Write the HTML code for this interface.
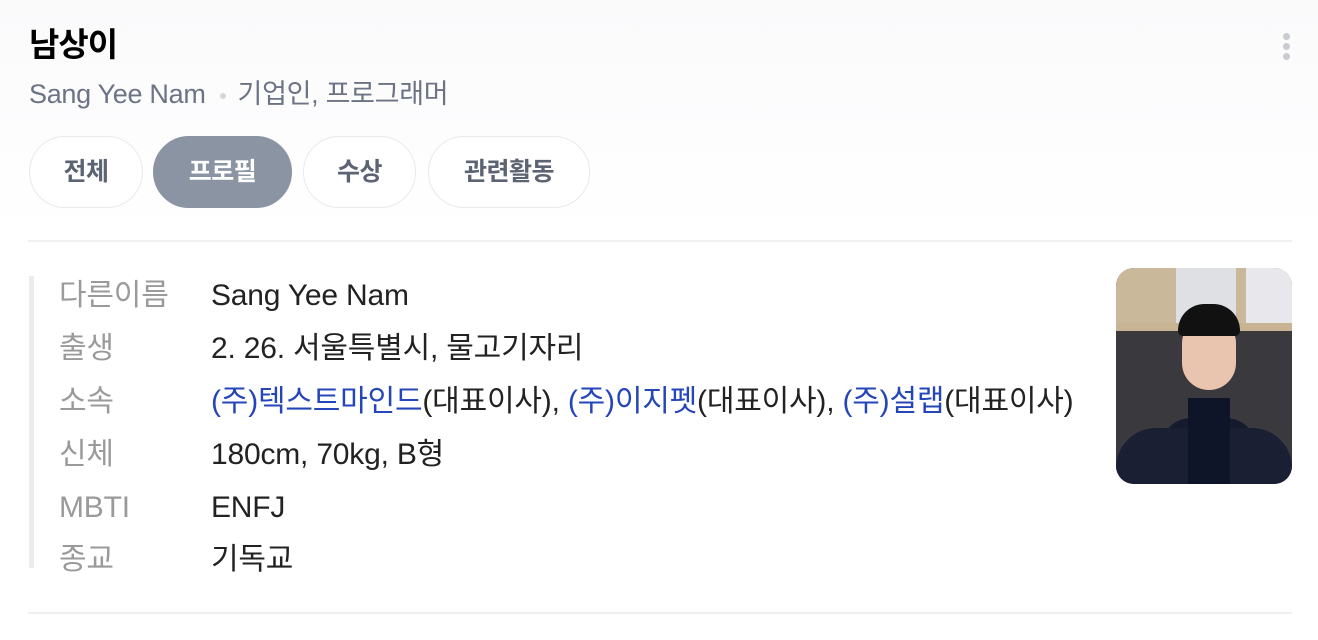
<!DOCTYPE html>
<html><head><meta charset="utf-8"><style>
body{margin:0;width:1318px;height:640px;overflow:hidden;background:#fff;font-family:"Liberation Sans","Noto Sans CJK KR",sans-serif;position:relative}
.top{position:absolute;left:0;top:0;width:1318px;height:230px;background:linear-gradient(#fafafb,#fdfdfe 60%,#fff)}
.abs{position:absolute;white-space:nowrap}
h1{position:absolute;left:29px;top:18px;margin:0;font-size:33px;font-weight:700;color:#000;letter-spacing:-1px}
.sub{left:29px;top:75px;font-size:27px;line-height:38px;color:#6b7385;letter-spacing:-0.3px}
.dot{display:inline-block;width:6px;height:6px;border-radius:3px;background:#d4d7dc;vertical-align:middle;margin:0 12px 0 14px}
.pill{position:absolute;top:136px;height:70px;border:1px solid #e8e9eb;border-radius:36px;background:#fff;font-size:25px;font-weight:700;color:#5c6373;text-align:center;line-height:70px;letter-spacing:-0.5px}
.pill.on{background:#8a94a3;color:#fff;border-color:#8a94a3}
.line{position:absolute;left:28px;width:1264px;height:2px;background:#f0f0f0}
.bar{position:absolute;left:29px;top:276px;width:5px;height:292px;background:#ececec}
.row{position:absolute;left:59px;font-size:30px;line-height:40px;height:40px;letter-spacing:-0.2px;white-space:nowrap}
.row .l{position:absolute;left:0;color:#9a9a9a}
.row .v{position:absolute;left:152px;color:#222}
a{color:#2546b8;text-decoration:none}
.more i{display:block;width:7px;height:7px;border-radius:4px;background:#c8cbd1;margin-bottom:3px}
</style></head><body>
<div class="top"></div>
<h1>남상이</h1>
<div class="abs sub">Sang Yee Nam<span class="dot"></span>기업인, 프로그래머</div>
<div class="abs more" style="left:1283px;top:33px"><i></i><i></i><i></i></div>
<div class="pill" style="left:29px;width:112px">전체</div>
<div class="pill on" style="left:153px;width:137px">프로필</div>
<div class="pill" style="left:303px;width:111px">수상</div>
<div class="pill" style="left:428px;width:160px">관련활동</div>
<div class="line" style="top:240px"></div>
<div class="bar"></div>
<div class="row" style="top:276px"><span class="l">다른이름</span><span class="v">Sang Yee Nam</span></div>
<div class="row" style="top:329px"><span class="l">출생</span><span class="v">2. 26. 서울특별시, 물고기자리</span></div>
<div class="row" style="top:382px"><span class="l">소속</span><span class="v"><a>(주)텍스트마인드</a>(대표이사), <a>(주)이지펫</a>(대표이사), <a>(주)설랩</a>(대표이사)</span></div>
<div class="row" style="top:435px"><span class="l">신체</span><span class="v">180cm, 70kg, B형</span></div>
<div class="row" style="top:488px"><span class="l">MBTI</span><span class="v">ENFJ</span></div>
<div class="row" style="top:540px"><span class="l">종교</span><span class="v">기독교</span></div>
<div class="abs" style="left:1116px;top:268px;width:176px;height:216px;border-radius:18px;overflow:hidden;background:#3a3a3e">
<div class="abs" style="left:0;top:0;width:176px;height:60px;background:#c9b89a"></div>
<div class="abs" style="left:60px;top:0;width:60px;height:60px;background:#dfe0e4"></div>
<div class="abs" style="left:130px;top:0;width:46px;height:55px;background:#e8e8ec"></div>
<div class="abs" style="left:0;top:55px;width:176px;height:8px;background:#c8b393"></div>
<div class="abs" style="left:45px;top:150px;width:95px;height:70px;border-radius:30px 30px 0 0;background:#151a2c"></div>
<div class="abs" style="left:66px;top:50px;width:54px;height:72px;border-radius:26px 26px 28px 28px;background:#e9c5b0"></div>
<div class="abs" style="left:62px;top:36px;width:62px;height:32px;border-radius:30px 30px 6px 6px;background:#111"></div>
<div class="abs" style="left:0;top:160px;width:176px;height:56px;background:#1a1f33;border-radius:40px 40px 0 0"></div>
<div class="abs" style="left:72px;top:130px;width:42px;height:86px;background:#0f1528"></div>
</div>
<div class="line" style="top:612px"></div>
</body></html>
